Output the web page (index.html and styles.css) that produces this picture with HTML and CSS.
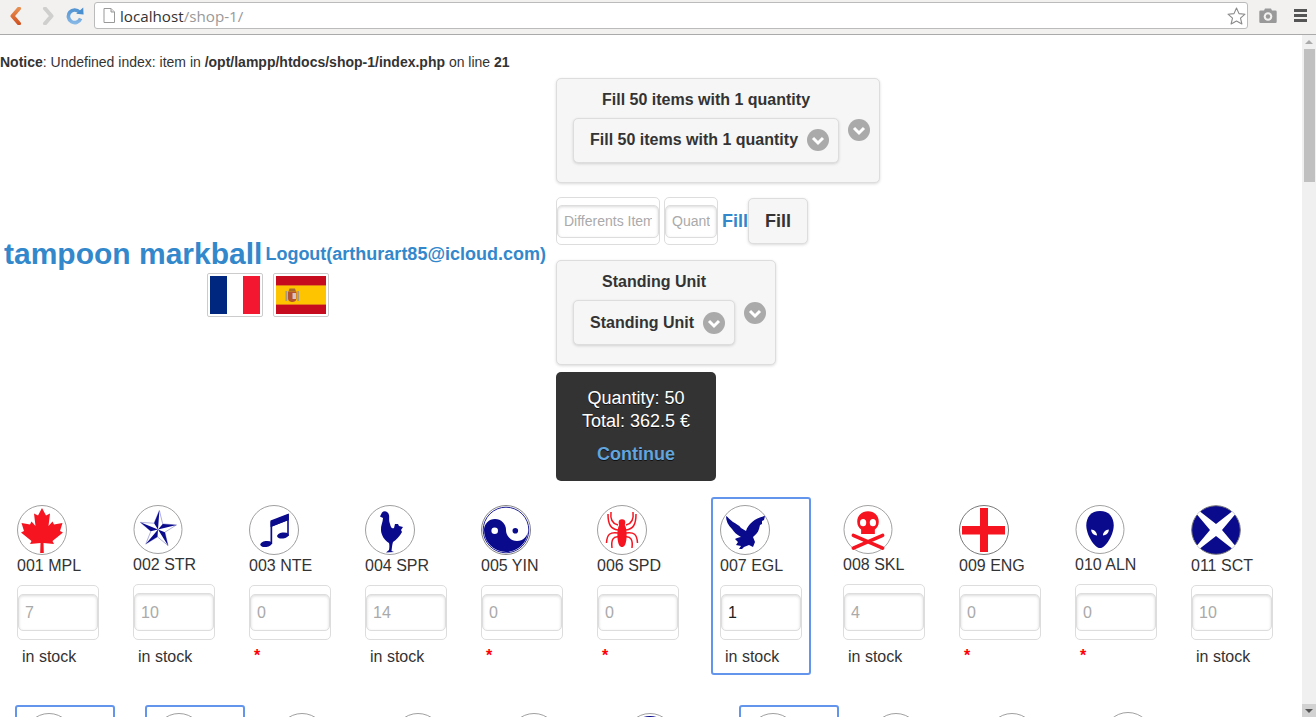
FILE: index.html
```html
<!DOCTYPE html>
<html lang="en">
<head>
<meta charset="utf-8">
<title>localhost/shop-1/</title>
<link rel="stylesheet" href="styles.css">
</head>
<body>
<div class="browser">
  <div class="toolbar">
    <svg class="tb-icon back" width="12" height="18" viewBox="0 0 12 18"><defs><linearGradient id="backGrad" gradientUnits="userSpaceOnUse" x1="0" y1="0" x2="0" y2="18"><stop offset="0" stop-color="#ea9355"/><stop offset="1" stop-color="#cf4f1e"/></linearGradient></defs><path d="M9 1.500 2.500 9 9 16.500" fill="none" stroke="url(#backGrad)" stroke-width="4" stroke-linecap="round" stroke-linejoin="round"/></svg>
    <svg class="tb-icon forward" width="12" height="18" viewBox="0 0 12 18"><path d="M3 1.500 9.500 9 3 16.500" fill="none" stroke="#cfcfcd" stroke-width="4" stroke-linecap="round" stroke-linejoin="round"/></svg>
    <svg class="tb-icon reload" width="18" height="18" viewBox="0 0 18 18"><defs><linearGradient id="reloadGrad" gradientUnits="userSpaceOnUse" x1="0" y1="0" x2="0" y2="18"><stop offset="0" stop-color="#4a8fd0"/><stop offset="1" stop-color="#8dbce8"/></linearGradient></defs><path d="M13.500 5.200A6.300 6.300 0 1 0 14.600 11.500" fill="none" stroke="url(#reloadGrad)" stroke-width="3.600"/><path d="M10.200 6.800 17.600 7.400 17.200 .6Z" fill="#4a8fd0"/></svg>
    <div class="omnibox">
      <svg class="doc" width="12" height="15" viewBox="0 0 12 15"><path d="M1 .5H8L11.500 4V14.500H1Z" fill="#fff" stroke="#999"/><path d="M8 .5V4H11.500" fill="#e4e4e4" stroke="#999"/></svg>
      <span class="url"><span class="host">localhost</span>/shop-1/</span>
      <svg class="star" width="19" height="18" viewBox="0 0 19 18"><path d="M9.500 1 12 6.600 18 7.200 13.500 11.200 14.900 17 9.500 14 4.100 17 5.500 11.200 1 7.200 7 6.600Z" fill="#fff" stroke="#8a8a8a" stroke-width="1.100" stroke-linejoin="round"/></svg>
    </div>
    <svg class="tb-icon camera" width="18" height="15" viewBox="0 0 18 15"><path d="M1.500 2.500H5L6 .5H12L13 2.500H16.500A1.200 1.200 0 0 1 17.700 3.700V13.800A1.200 1.200 0 0 1 16.500 15H1.500A1.200 1.200 0 0 1 .3 13.800V3.700A1.200 1.200 0 0 1 1.500 2.500Z" fill="#999"/><circle cx="9" cy="8.500" r="4.300" fill="#f2f1f0"/><circle cx="9" cy="8.500" r="2.200" fill="#999"/></svg>
    <div class="menu"><span></span><span></span><span></span></div>
  </div>

  <div class="viewport">
    <main class="page">
      <p class="notice"><b>Notice</b>: Undefined index: item in <b>/opt/lampp/htdocs/shop-1/index.php</b> on line <b>21</b></p>

      <div class="head">
        <div class="brand">
          <div class="brand-line">
            <a class="title" href="#">tampoon markball</a>
            <a class="logout" href="#">Logout(arthurart85@icloud.com)</a>
          </div>
          <div class="flags">
            <span class="flag"><svg width="50" height="38" viewBox="0 0 50 38"><rect width="17" height="38" fill="#002780"/><rect x="17" width="16" height="38" fill="#fff"/><rect x="33" width="17" height="38" fill="#f31830"/></svg></span>
            <span class="flag"><svg width="50" height="38" viewBox="0 0 50 38"><rect width="50" height="38" fill="#c60b1e"/><rect y="9.500" width="50" height="19" fill="#ffc400"/><rect y="9" width="50" height=".8" fill="#e0801a"/><rect y="28.200" width="50" height=".8" fill="#e0801a"/><rect x="9.500" y="15" width="1.800" height="10" fill="#a89a80"/><rect x="21.300" y="15" width="1.800" height="10" fill="#a89a80"/><path d="M12 15.500H20.500V22.500C20.500 25 18 26 16.300 26 14.500 26 12 25 12 22.500Z" fill="#b5532e"/><rect x="16.500" y="17" width="3.500" height="6" fill="#d5c3cc"/><path d="M12.500 15.500 13.500 12.500H19L20 15.500Z" fill="#a8692c"/></svg></span>
          </div>
        </div>

        <div class="controls">
          <div class="panel panel-a">
            <div class="select-col">
              <div class="select-label">Fill 50 items with 1 quantity</div>
              <div class="select-btn">Fill 50 items with 1 quantity
                <svg class="chev" width="22" height="22" viewBox="0 0 22 22"><circle cx="11" cy="11" r="11" fill="#aaa"/><path d="M6 9 11 14l5-5" fill="none" stroke="#fff" stroke-width="3"/></svg>
              </div>
            </div>
            <svg class="chev outer" width="22" height="22" viewBox="0 0 22 22"><circle cx="11" cy="11" r="11" fill="#aaa"/><path d="M6 9 11 14l5-5" fill="none" stroke="#fff" stroke-width="3"/></svg>
          </div>

          <div class="fill-row">
            <div class="field field-wide"><input class="field-input small" placeholder="Differents Item"></div>
            <div class="field field-narrow"><input class="field-input small" placeholder="Quant"></div>
            <a class="fill-link" href="#">Fill</a>
            <button class="fill-btn" type="button">Fill</button>
          </div>

          <div class="panel panel-b">
            <div class="select-col">
              <div class="select-label">Standing Unit</div>
              <div class="select-btn">Standing Unit
                <svg class="chev" width="22" height="22" viewBox="0 0 22 22"><circle cx="11" cy="11" r="11" fill="#aaa"/><path d="M6 9 11 14l5-5" fill="none" stroke="#fff" stroke-width="3"/></svg>
              </div>
            </div>
            <svg class="chev outer" width="22" height="22" viewBox="0 0 22 22"><circle cx="11" cy="11" r="11" fill="#aaa"/><path d="M6 9 11 14l5-5" fill="none" stroke="#fff" stroke-width="3"/></svg>
          </div>

          <div class="summary">
            <div>Quantity: 50</div>
            <div>Total: 362.5 €</div>
            <a class="continue" href="#">Continue</a>
          </div>
        </div>
      </div>

      <div class="items">
        <div class="item">
          <svg class="emblem" viewBox="0 0 50 50"><circle cx="25" cy="25" r="24.500" fill="#fff" stroke="#888" stroke-width=".8"/><path d="M25 3 29 10.500 33 8.500 31.500 21 35.500 16.500 37 19.500 45.500 18 43 26 46 27.500 35.500 36 37 39 26.500 38 26.800 48H23.200L23.500 38 13 39 14.500 36 4 27.500 7 26 4.500 18 13 19.500 14.500 16.500 18.500 21 17 8.500 21 10.500Z" fill="#f5141f"/></svg>
          <div class="code">001 MPL</div>
          <div class="field"><input class="field-input" placeholder="7"></div>
          <div class="stock">in stock</div>
        </div>
        <div class="item short">
          <svg class="emblem" viewBox="0 0 50 50"><circle cx="25" cy="25" r="24.500" fill="#fff" stroke="#888" stroke-width=".8"/><path d="M26.400 5.500 29.800 19.300 43.900 20.300 32 27.800 35.300 41.500 24.500 32.500 12.500 39.900 17.700 26.800 6.900 17.700 21 18.600Z" fill="#fff" stroke="#9a9ad0" stroke-width=".8"/><path d="M25 25 26.400 5.500 21 18.600ZM25 25 43.900 20.300 29.800 19.300ZM25 25 35.300 41.500 32 27.800ZM25 25 12.500 39.900 24.500 32.500ZM25 25 6.900 17.700 17.700 26.800Z" fill="#0a0a8c"/></svg>
          <div class="code">002 STR</div>
          <div class="field"><input class="field-input" placeholder="10"></div>
          <div class="stock">in stock</div>
        </div>
        <div class="item">
          <svg class="emblem" viewBox="0 0 50 50"><circle cx="25" cy="25" r="24.500" fill="#fff" stroke="#888" stroke-width=".8"/><path d="M21.500 16.500 39.800 9V31H38.200V15.500L23.200 21.500V39H21.500Z" fill="#0a0a8c"/><path d="M21.500 15.500 39.800 8.500V15L21.500 22Z" fill="#0a0a8c"/><ellipse cx="17" cy="39" rx="5.800" ry="3" transform="rotate(-8 17 39)" fill="#0a0a8c"/><ellipse cx="33.800" cy="30.500" rx="5.800" ry="3" transform="rotate(-8 33.800 30.500)" fill="#0a0a8c"/></svg>
          <div class="code">003 NTE</div>
          <div class="field"><input class="field-input" placeholder="0"></div>
          <div class="required">*</div>
        </div>
        <div class="item">
          <svg class="emblem" viewBox="0 0 50 50"><circle cx="25" cy="25" r="24.500" fill="#fff" stroke="#888" stroke-width=".8"/><path d="M17 7.500C19 5.500 23 6 24 10 24.500 13 23.500 15 25 19 26 23 27 24 29 23L30 19 33 19 34 21 38 22 36 25 37 27C35 31 31 35 28 37 27 40 27 43 26.500 46L29 47 21 47.500 24 45C24.500 42 24.500 40 24 38 20 36 16 30 16 25 15.500 21 18 17 18 13L15 11.500Z" fill="#0a0a8c"/></svg>
          <div class="code">004 SPR</div>
          <div class="field"><input class="field-input" placeholder="14"></div>
          <div class="stock">in stock</div>
        </div>
        <div class="item">
          <svg class="emblem" viewBox="0 0 50 50"><circle cx="25" cy="25" r="24.500" fill="#fff" stroke="#666" stroke-width=".8"/><circle cx="25" cy="25" r="22.800" fill="#fff" stroke="#0a0a8c" stroke-width=".9"/><path d="M3 25A22 22 0 0 0 47 25 11 11 0 0 1 25 25 11 11 0 0 0 3 25Z" fill="#0a0a8c"/><circle cx="13.700" cy="25.700" r="3.300" fill="#fff"/><circle cx="34.300" cy="25.700" r="2.800" fill="#0a0a8c"/></svg>
          <div class="code">005 YIN</div>
          <div class="field"><input class="field-input" placeholder="0"></div>
          <div class="required">*</div>
        </div>
        <div class="item">
          <svg class="emblem" viewBox="0 0 50 50"><circle cx="25" cy="25" r="24.500" fill="#fff" stroke="#888" stroke-width=".8"/><circle cx="25" cy="17.500" r="3.300" fill="#f5141f"/><path d="M25 18C29 18 30 26 29.500 33 29 40 27 42 25 42 23 42 21 40 20.500 33 20 26 21 18 25 18Z" fill="#f5141f"/><path d="M21 20C16 19 13 15 14 7M29 20C34 19 37 15 36 7M21 25C14 24 11 20 11 9M29 25C36 24 39 20 39 9M21 28C13 27 10 29 9.500 38M29 28C37 27 40 29 40.500 38M22 32C16 31 14 35 15 43M28 32C34 31 36 35 35 43" fill="none" stroke="#f5141f" stroke-width="1.500"/></svg>
          <div class="code">006 SPD</div>
          <div class="field"><input class="field-input" placeholder="0"></div>
          <div class="required">*</div>
        </div>
        <div class="item selected">
          <svg class="emblem" viewBox="0 0 50 50"><circle cx="25" cy="25" r="24.500" fill="#fff" stroke="#888" stroke-width=".8"/><path d="M6 11C8 12 10 15 13 17 16 19 19 20 21 23L26 26C28 19 35 13 45 11L44 15 42 16 42 19 40 20 39 24C38 28 35 30 33 32L35 37 33 42 29 40 24 42 22 44 19 44 21 41 16 40 18 37 15 34C17 33 19 32 21 32 17 30 14 27 12 24 8 20 6 16 6 11Z" fill="#0a0a8c"/></svg>
          <div class="code">007 EGL</div>
          <div class="field"><input class="field-input" value="1"></div>
          <div class="stock">in stock</div>
        </div>
        <div class="item short">
          <svg class="emblem" viewBox="0 0 50 50"><circle cx="25" cy="25" r="24.500" fill="#fff" stroke="#888" stroke-width=".8"/><path d="M25 6.500C31.500 6.500 36 11 36 17 36 21 34 23.500 32 25V29.500H18V25C16 23.500 14 21 14 17 14 11 18.500 6.500 25 6.500Z" fill="#f5141f"/><ellipse cx="20" cy="18" rx="3.200" ry="3.600" fill="#fff"/><ellipse cx="30" cy="18" rx="3.200" ry="3.600" fill="#fff"/><path d="M10 31 40 44M40 31 10 44" stroke="#f5141f" stroke-width="3.500" stroke-linecap="round"/></svg>
          <div class="code">008 SKL</div>
          <div class="field"><input class="field-input" placeholder="4"></div>
          <div class="stock">in stock</div>
        </div>
        <div class="item">
          <svg class="emblem" viewBox="0 0 50 50"><circle cx="25" cy="25" r="24.500" fill="#fff" stroke="#555" stroke-width=".8"/><path d="M21 3H29V21H46V29.500H29V47H21V29.500H3V21H21Z" fill="#f5141f"/></svg>
          <div class="code">009 ENG</div>
          <div class="field"><input class="field-input" placeholder="0"></div>
          <div class="required">*</div>
        </div>
        <div class="item short">
          <svg class="emblem" viewBox="0 0 50 50"><circle cx="25" cy="25" r="24.500" fill="#fff" stroke="#888" stroke-width=".8"/><path d="M25 6C34 6 39 12 39 21 39 30 31 44 25 44 19 44 11 30 11 21 11 12 16 6 25 6Z" fill="#0a0a8c"/><path d="M16 25C19 25 22 28 22 31 19 31 16 29 16 25ZM34 25C31 25 28 28 28 31 31 31 34 29 34 25Z" fill="#fff"/></svg>
          <div class="code">010 ALN</div>
          <div class="field"><input class="field-input" placeholder="0"></div>
          <div class="required">*</div>
        </div>
        <div class="item">
          <svg class="emblem" viewBox="0 0 50 50"><circle cx="25" cy="25" r="24.300" fill="#0a0a8c" stroke="#777" stroke-width="1"/><path d="M9 6.500 25 19 41 6.500 44 9.500 31 25 44 40.500 41 43.500 25 31 9 43.500 6 40.500 19 25 6 9.500Z" fill="#fff"/></svg>
          <div class="code">011 SCT</div>
          <div class="field"><input class="field-input" placeholder="10"></div>
          <div class="stock">in stock</div>
        </div>

        <div class="item selected"><svg class="emblem" viewBox="0 0 50 50"><circle cx="25" cy="25" r="24.500" fill="#fff" stroke="#888" stroke-width=".8"/></svg></div>
        <div class="item selected"><svg class="emblem" viewBox="0 0 50 50"><circle cx="25" cy="25" r="24.500" fill="#fff" stroke="#888" stroke-width=".8"/></svg></div>
        <div class="item"><svg class="emblem" viewBox="0 0 50 50"><circle cx="25" cy="25" r="24.500" fill="#fff" stroke="#888" stroke-width=".8"/></svg></div>
        <div class="item"><svg class="emblem" viewBox="0 0 50 50"><circle cx="25" cy="25" r="24.500" fill="#fff" stroke="#888" stroke-width=".8"/></svg></div>
        <div class="item"><svg class="emblem" viewBox="0 0 50 50"><circle cx="25" cy="25" r="24.500" fill="#fff" stroke="#888" stroke-width=".8"/></svg></div>
        <div class="item"><svg class="emblem" viewBox="0 0 50 50"><circle cx="25" cy="25" r="24.500" fill="#fff" stroke="#888" stroke-width=".8"/><circle cx="25" cy="25" r="22" fill="#0a0a8c"/></svg></div>
        <div class="item selected"><svg class="emblem" viewBox="0 0 50 50"><circle cx="25" cy="25" r="24.500" fill="#fff" stroke="#888" stroke-width=".8"/></svg></div>
        <div class="item"><svg class="emblem" viewBox="0 0 50 50"><circle cx="25" cy="25" r="24.500" fill="#fff" stroke="#888" stroke-width=".8"/></svg></div>
        <div class="item"><svg class="emblem" viewBox="0 0 50 50"><circle cx="25" cy="25" r="24.500" fill="#fff" stroke="#888" stroke-width=".8"/></svg></div>
        <div class="item raised"><svg class="emblem" viewBox="0 0 50 50"><circle cx="25" cy="25" r="24.500" fill="#fff" stroke="#888" stroke-width=".8"/></svg></div>
      </div>
    </main>

    <div class="scrollbar">
      <div class="sb-btn sb-up"></div>
      <div class="sb-thumb"></div>
      <div class="sb-track"></div>
      <div class="sb-btn sb-down"></div>
    </div>
  </div>
</div>
</body>
</html>
```

FILE: styles.css
```css
* { box-sizing: border-box; }

html, body {
  margin: 0;
  height: 100%;
  overflow: hidden;
}

body {
  font-family: "Liberation Sans", Arial, sans-serif;
  font-size: 16px;
  color: #333;
  background: #fff;
}

a { color: #38c; text-decoration: none; }

.browser {
  display: flex;
  flex-direction: column;
  height: 100vh;
}

/* browser toolbar */
.toolbar {
  flex: 0 0 35px;
  display: flex;
  align-items: center;
  padding: 0 9px 3px 10px;
  background: #f2f1f0;
  border-bottom: 1px solid #aaa;
}

.tb-icon { flex: none; display: block; }
.forward { margin-left: 20px; }
.reload { margin-left: 12px; }

.omnibox {
  flex: 1;
  height: 27px;
  margin: 0 11px 0 10px;
  display: flex;
  align-items: center;
  padding: 0 1px 0 8px;
  background: #fff;
  border: 1px solid #bbb;
  border-radius: 3px;
}

.doc { flex: none; }

.url {
  flex: 1;
  margin-left: 5px;
  font-family: "Open Sans", sans-serif;
  font-size: 15.2px;
  color: #999;
}

.host { color: #333; }

.star { flex: none; }

.menu {
  flex: none;
  width: 13px;
  margin-left: 17px;
  display: flex;
  flex-direction: column;
  gap: 2px;
}

.menu span {
  display: block;
  height: 3px;
  background: #555;
}

/* page area */
.viewport {
  flex: 1;
  min-height: 0;
  display: flex;
}

.page {
  flex: 1;
  min-width: 0;
  overflow: hidden;
}

.notice {
  margin: 0;
  padding-top: 18px;
  font-size: 14px;
  line-height: 18px;
}

.head {
  display: flex;
  margin-top: 7px;
}

.brand {
  flex: 0 0 556px;
  align-self: center;
  padding: 0 0 7px 4px;
}

.brand-line {
  display: flex;
  align-items: center;
  gap: 3px;
}

.title {
  font-size: 30px;
  line-height: 38px;
  font-weight: 700;
}

.logout {
  font-size: 18px;
  font-weight: 700;
}

.flags {
  display: flex;
  gap: 10px;
  padding-left: 203px;
}

.flag {
  display: block;
  width: 56px;
  height: 44px;
  padding: 2px;
  border: 1px solid #ccc;
  border-radius: 2px;
}

.flag svg { display: block; }

.controls {
  display: flex;
  flex-direction: column;
  align-items: flex-start;
}

.panel {
  display: flex;
  height: 105px;
  padding: 0 9px 0 16px;
  background: #f6f6f6;
  border: 1px solid #ddd;
  border-radius: 5px;
  box-shadow: 0 1px 3px rgba(0, 0, 0, .15);
}

.select-col { display: flex; flex-direction: column; }

.select-label {
  margin: 11px 0 0 29px;
  font-weight: 700;
  line-height: 20px;
}

.select-btn {
  display: flex;
  align-items: center;
  gap: 9px;
  height: 45px;
  margin-top: 8px;
  padding: 0 9px 0 16px;
  font-weight: 700;
  background: #f6f6f6;
  border: 1px solid #ddd;
  border-radius: 5px;
  box-shadow: 0 1px 3px rgba(0, 0, 0, .15);
}

.panel-a .select-btn { padding-bottom: 2px; }

.chev { flex: none; display: block; }
.select-btn .chev { margin-top: 1px; }
.outer { margin: 40px 0 0 9px; }
.panel-b .outer { margin-top: 41px; }

.fill-row {
  display: flex;
  align-items: center;
  gap: 4px;
  margin: 14px 0 15px;
}

/* the doubled text field */
.field {
  width: 82px;
  padding: 8px 0;
  border: 1px solid #ddd;
  border-radius: 5px;
  background: #fff;
}

.field-input {
  display: block;
  width: 100%;
  height: 37px;
  padding: 0 6px;
  font: 16px "Liberation Sans", Arial, sans-serif;
  color: #222;
  background: #fff;
  border: 1px solid #ddd;
  border-radius: 5px;
  outline: 0;
  box-shadow: inset 0 1px 3px rgba(0, 0, 0, .15);
}

.field-input::placeholder { color: #aaa; opacity: 1; }

.field-input.small {
  height: 33px;
  padding-bottom: 2px;
  font-size: 14px;
}

.field-wide { width: 104px; height: 48px; padding-top: 7px; }
.field-narrow { width: 54px; height: 48px; padding-top: 7px; }

.fill-link {
  font-size: 18px;
  font-weight: 700;
}

.fill-btn {
  width: 60px;
  height: 46px;
  margin-left: -4px;
  padding: 0;
  font: 700 18px "Liberation Sans", Arial, sans-serif;
  color: #333;
  background: #f6f6f6;
  border: 1px solid #ddd;
  border-radius: 5px;
  box-shadow: 0 1px 3px rgba(0, 0, 0, .15);
}

.summary {
  width: 160px;
  height: 109px;
  margin-top: 7px;
  padding-top: 15px;
  text-align: center;
  font-size: 18px;
  line-height: 23px;
  color: #fff;
  background: #333;
  border-radius: 5px;
  text-shadow: 0 1px 0 #111;
}

.continue {
  display: block;
  margin-top: 10px;
  font-weight: 700;
  color: #62a5de;
}

/* product grid */
.items {
  display: flex;
  flex-wrap: wrap;
  margin-top: 16px;
  padding-left: 8px;
}

.item {
  flex: none;
  width: 100px;
  height: 178px;
  margin: 0 16px 30px 0;
  padding: 6px 7px;
  border: 2px solid transparent;
  border-radius: 3px;
}

.item.selected {
  margin: 0 23px 30px 7px;
  border-color: #6495ed;
}

.item.raised { margin-top: -1px; }

.emblem {
  display: block;
  width: 50px;
  height: 50px;
}

.code {
  margin-top: 1px;
  line-height: 20px;
  white-space: nowrap;
}

.item > .field { margin-top: 9px; }

.stock {
  margin: 7px 0 0 5px;
  line-height: 20px;
}

.required {
  margin: 6px 0 0 5px;
  line-height: 20px;
  font-weight: 700;
  color: #f00;
}

.short .emblem { height: 49px; }
.short .field-input { height: 38px; padding-top: 1px; }

/* scrollbar */
.scrollbar {
  flex: 0 0 14px;
  display: flex;
  flex-direction: column;
  background: #f0f0f0;
}

.sb-btn {
  flex: none;
  display: flex;
  align-items: center;
  justify-content: center;
}

.sb-up { height: 14px; }
.sb-down { height: 13px; background: #d2d2d2; }

.sb-up::before {
  content: "";
  border: 4px solid transparent;
  border-top: 0;
  border-bottom: 4px solid #aaa;
}

.sb-down::before {
  content: "";
  border: 4px solid transparent;
  border-bottom: 0;
  border-top: 4px solid #555;
}

.sb-thumb {
  flex: 0 0 133px;
  margin: 0 1px 0 2px;
  background: #c0c0c0;
}

.sb-track { flex: 1; }
```
